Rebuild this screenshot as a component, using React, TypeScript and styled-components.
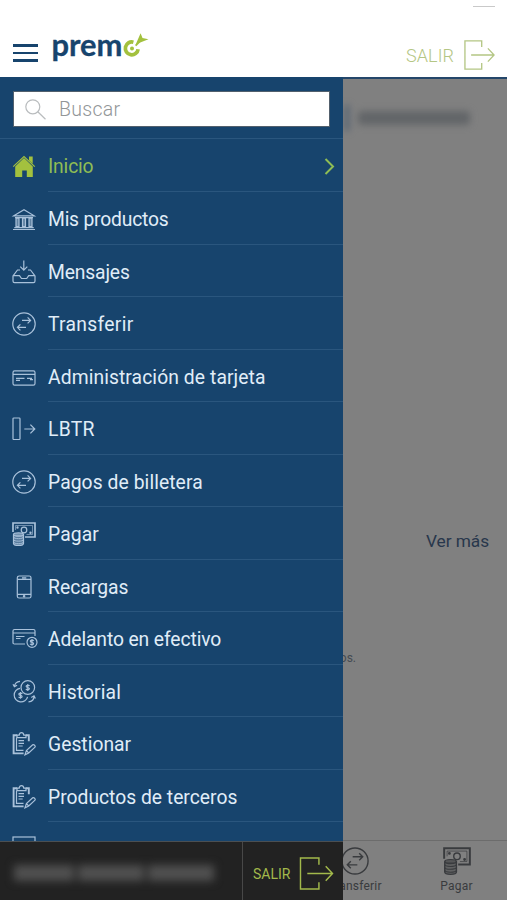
import React from "react";
import styled, { createGlobalStyle } from "styled-components";

const Global = createGlobalStyle`
  * { box-sizing: border-box; }
  body { margin: 0; background: #fff; font-family: Roboto, "Noto Sans", sans-serif; }
`;

const navy = "#17446d";
const lime = "#a3c13e";
const ice = "#a9c1da";

const Page = styled.div`
  width: 507px;
  height: 900px;
  overflow: hidden;
  display: grid;
  grid-template-rows: 77px 823px;
  background: #fff;
`;

const Header = styled.header`
  display: grid;
  grid-template-rows: 5px 2px 1fr;
`;

const Handle = styled.div`
  width: 22px;
  height: 1px;
  margin-top: 1px;
  margin-right: 12px;
  justify-self: end;
  background: #c9c9c9;
  grid-row: 2;
`;

const HeaderRow = styled.div`
  grid-row: 3;
  display: flex;
  align-items: flex-start;
  padding: 11px 12px 0 13px;
`;

const Burger = styled.div`
  display: flex;
  flex-direction: column;
  gap: 5px;
  width: 25px;
  padding-top: 26px;
`;

const BurgerBar = styled.span`
  height: 2.5px;
  background: ${navy};
`;

const Logo = styled.svg`
  display: block;
  margin-left: 8px;
  overflow: visible;
`;

const HeaderExit = styled.div`
  margin-left: auto;
  display: flex;
  align-items: center;
  gap: 10px;
  height: 30px;
  margin-top: 22px;
  color: #b4c684;
  font-size: 18px;
  font-weight: 300;
`;

const ExitText = styled.span<{ $space: number }>`
  letter-spacing: ${(p) => p.$space}px;
  margin-right: ${(p) => -p.$space}px;
`;

const Body = styled.div`
  display: grid;
  grid-template-columns: 343px 164px;
  grid-template-rows: 823px;
`;

const Content = styled.main`
  grid-area: 1 / 1 / 2 / 3;
  display: grid;
  grid-template-rows: 78px 415px 102px 166px 1fr;
  border-top: 2px solid #24466a;
  background: #808080;
  overflow: hidden;
`;

const Greeting = styled.div`
  display: flex;
  align-items: center;
  justify-content: flex-end;
  gap: 9px;
  padding-right: 37px;
  filter: blur(3.5px);
`;

const GreetingMark = styled.span`
  width: 4px;
  height: 26px;
  background: #4e5d6e;
`;

const GreetingWord = styled.span`
  width: 112px;
  height: 14px;
  border-radius: 4px;
  background: #626568;
`;

const MoreLink = styled.div`
  display: flex;
  align-items: flex-end;
  justify-content: flex-end;
  padding: 0 18px 21px 0;
  font-size: 17.3px;
  line-height: 20px;
  letter-spacing: -0.05px;
  color: #28374c;
`;

const Notice = styled.div`
  display: flex;
  align-items: flex-end;
  justify-content: flex-end;
  padding: 0 151px 9px 0;
  font-size: 12px;
  line-height: 14px;
  color: #454b52;
`;

const TabBar = styled.nav`
  grid-row: 5;
  display: grid;
  grid-template-columns: 304px 102px 101px;
  border-top: 1px solid #6c6c6c;
  color: #393b3e;
`;

const Tab = styled.div`
  display: flex;
  flex-direction: column;
  align-items: center;
  padding-top: 6px;
  font-size: 12px;
  line-height: 14px;
  letter-spacing: 0.2px;
  gap: 4px;
`;

const Drawer = styled.aside`
  grid-area: 1 / 1 / 2 / 2;
  display: grid;
  grid-template-rows: 61px 703px 59px;
  background: ${navy};
  z-index: 1;
  overflow: hidden;
`;

const SearchArea = styled.div`
  padding: 14px 13px 0;
`;

const SearchBox = styled.div`
  height: 36px;
  display: flex;
  align-items: center;
  gap: 13px;
  padding-left: 11px;
  background: #fff;
  border: 1.5px solid #52606d;
  color: #929698;
  font-size: 19.5px;
  font-weight: 300;
  letter-spacing: 0.3px;
`;

const SearchGlyph = styled.span`
  color: #b9bcbe;
`;

const Menu = styled.div`
  border-top: 1px solid #2a567e;
  overflow: hidden;
`;

const Item = styled.div<{ $active?: boolean; $first?: boolean }>`
  height: ${(p) => (p.$first ? 53.3 : 52.53)}px;
  display: grid;
  grid-template-columns: 48px 1fr;
  color: ${(p) => (p.$active ? lime : ice)};
`;

const IconCell = styled.div`
  display: flex;
  align-items: center;
  padding: 1px 0 0 12px;
`;

const LabelCell = styled.div<{ $active?: boolean }>`
  display: flex;
  align-items: center;
  justify-content: space-between;
  padding: 3px 8px 0 0;
  border-bottom: 1px solid #2a567e;
  color: ${(p) => (p.$active ? "#8fbd54" : "#e0edf8")};
`;

const Label = styled.span<{ $space: number }>`
  font-size: 19.3px;
  letter-spacing: ${(p) => p.$space}px;
  white-space: nowrap;
`;

const Footer = styled.footer`
  display: grid;
  grid-template-columns: 242px 1fr;
  background: #222;
  border-top: 1px solid #4b4f52;
`;

const UserName = styled.div`
  display: flex;
  align-items: center;
  gap: 4px;
  padding: 4px 0 0 14px;
  filter: blur(4.5px);
`;

const NamePart = styled.span<{ $w: number }>`
  width: ${(p) => p.$w}px;
  height: 16px;
  background: #505050;
`;

const FooterExit = styled.div`
  display: flex;
  align-items: center;
  gap: 9px;
  padding: 5px 0 0 10px;
  border-left: 1.5px solid #484848;
  color: #a2b94b;
  font-size: 14px;
`;

const Icon = styled.svg<{ $sw?: number }>`
  display: block;
  fill: none;
  stroke: currentColor;
  stroke-width: ${(p) => p.$sw ?? 1.2};
  overflow: visible;
  flex: none;
`;

function ExitIcon({ w, h, sw }: { w: number; h: number; sw: number }) {
  return (
    <Icon width={w} height={h} viewBox="0 0 35 34" $sw={sw}>
      <path d="M20 8V1H1v32h19v-7M8 17h26M27 9.5l7 7.5-7 7.5" />
    </Icon>
  );
}

function Swap({ size = 24 }: { size?: number }) {
  return (
    <Icon width={size} height={size} viewBox="0 0 24 24">
      <circle cx="12" cy="12" r="11.2" />
      <path d="M10 8.4h8.6M15.6 5.4l3 3-3 3M14 15.3H5.4M8.4 12.3l-3 3 3 3" />
    </Icon>
  );
}

function Money({ size = 24 }: { size?: number }) {
  return (
    <Icon width={size} height={size} viewBox="0 0 24 24">
      <path d="M1 10V1h22v14H13" strokeWidth="1.7" />
      <path d="M3.5 8V3.5h17v9h-6" strokeWidth=".6" />
      <circle cx="12" cy="8" r="2.8" />
      <circle cx="5.5" cy="5.5" r=".6" />
      <circle cx="18.5" cy="10.7" r=".6" />
      <path d="M1.5 12.5v9c0 2.6 10 2.6 10 0v-9" fill="currentColor" fillOpacity=".45" />
      <ellipse cx="6.5" cy="12.5" rx="5" ry="1.7" fill="currentColor" fillOpacity=".5" />
      <path d="M1.5 15c0 2.2 10 2.2 10 0M1.5 17.5c0 2.2 10 2.2 10 0M1.5 20c0 2.2 10 2.2 10 0" strokeWidth=".9" />
    </Icon>
  );
}

function Dollar({ x, y }: { x: number; y: number }) {
  return (
    <path
      transform={`translate(${x} ${y})`}
      d="M1.8-1.5C1-2.7-1.8-2.4-1.6-1c.2 1.3 3.2.7 3.2 2.1 0 1.5-2.5 1.6-3.5.4M0-3.4v6.8"
    />
  );
}

function Home() {
  return (
    <Icon width="24" height="24" viewBox="0 0 24 24">
      <path d="M3.2 12.6 12 4l8.8 8.6V23h-6v-6.5h-4.6V23h-7z" fill="currentColor" stroke="none" />
      <path d="M1.2 12.6 12 2.6l10.8 10" />
      <path d="M17 2.5h3.7v7.2L17 6.3z" fill="currentColor" stroke="none" />
    </Icon>
  );
}

function Bank() {
  return (
    <Icon width="24" height="24" viewBox="0 0 24 24">
      <path d="M1.8 8.8 12 2.8l10.2 6zM3 10.7h18M2.3 20.6h19.4M1 22.5h22" />
      <path d="M4 11.2h3v8.5H4zM10.5 11.2h3v8.5h-3zM17 11.2h3v8.5h-3z" fill="currentColor" fillOpacity=".5" />
    </Icon>
  );
}

function Inbox() {
  return (
    <Icon width="24" height="24" viewBox="0 0 24 24">
      <path d="M11.8.5V10M8.3 6.7l3.5 3.5 3.5-3.5M8 10H5.5L1 16v5c0 1 .5 1.7 1.5 1.7h19c1 0 1.5-.7 1.5-1.7v-5l-4.5-6H16M1 15.6h6.5l2 2.9h5.2l2-2.9H23" />
    </Icon>
  );
}

function Card() {
  return (
    <Icon width="24" height="24" viewBox="0 0 24 24">
      <rect x="1" y="5.9" width="22" height="14.3" rx="1.6" />
      <path d="M1 9.4h22M4 13.4h8.5M4 15.4h4M15 13.4h5M18 14.6h3" />
    </Icon>
  );
}

function Gate() {
  return (
    <Icon width="24" height="24" viewBox="0 0 24 24">
      <rect x="1" y="1" width="7" height="21.5" rx=".8" />
      <path d="M12.3 12h10.5M18.4 7.6l4.4 4.4-4.4 4.4" />
    </Icon>
  );
}

function Phone() {
  return (
    <Icon width="24" height="24" viewBox="0 0 24 24">
      <rect x="5.3" y="1" width="13.7" height="22" rx="1.8" />
      <path d="M5.3 4.4H19M5.3 19.3H19M10 2.8h4.3" />
      <circle cx="12.1" cy="21.2" r=".7" />
    </Icon>
  );
}

function Advance() {
  return (
    <Icon width="26" height="24" viewBox="0 0 26 24">
      <path d="M13 17H2.5C1.6 17 1 16.5 1 15.7V4C1 3.1 1.6 2.5 2.5 2.5h19c1 0 1.5.6 1.5 1.5v5M1 6h22M4 9.5h8.5M4 11.5h4.5" />
      <circle cx="20" cy="15.3" r="5" />
      <Dollar x={20} y={15.3} />
    </Icon>
  );
}

function History() {
  return (
    <Icon width="24" height="24" viewBox="0 0 24 24">
      <circle cx="15.8" cy="7.5" r="6.8" />
      <path d="M8 8.4a6.8 6.8 0 1 0 7.6 8.4" />
      <Dollar x={15.8} y={7.5} />
      <Dollar x={8.5} y={15.3} />
      <path d="M2.4 6.5C2.8 3.2 4.6 1.6 8 1.3M1 4.2l1.4 2.6 2.7-1.5M22 16c0 3.5-2 5.7-5.5 5.9M19.3 17.5l2.7-1.7 1.4 2.8" />
    </Icon>
  );
}

function Clipboard() {
  return (
    <Icon width="24" height="24" viewBox="0 0 24 24">
      <path d="M5 3.2H1.6v18.2h10M13.8 3.2h3v6" strokeWidth="1.9" />
      <path d="M4.5 5.5v12.8h7M5 5.7V3.2h2.2C7.5-.2 11.5-.2 11.8 3.2H14v2.5zM6.5 8.7h5.5M6.5 11.4h5.5M6.5 14h4.2" />
      <path d="m13 22.8 1.4-4.2 6.3-5.8c1-.8 3.3 1.2 2.3 2.4l-6.3 5.8zM14.5 18.6l2.2 2.4" />
    </Icon>
  );
}

const items: [string, number, React.ReactNode][] = [
  ["Inicio", -0.15, <Home />],
  ["Mis productos", -0.2, <Bank />],
  ["Mensajes", -0.15, <Inbox />],
  ["Transferir", 0.3, <Swap />],
  ["Administración de tarjeta", 0.09, <Card />],
  ["LBTR", 0.3, <Gate />],
  ["Pagos de billetera", 0.08, <Swap />],
  ["Pagar", 0.1, <Money />],
  ["Recargas", 0.02, <Phone />],
  ["Adelanto en efectivo", -0.1, <Advance />],
  ["Historial", 0.12, <History />],
  ["Gestionar", 0.02, <Clipboard />],
  ["Productos de terceros", 0, <Clipboard />],
];

const NextItem = styled.div`
  padding: 14px 0 0 12px;
  color: ${ice};
`;

export default function App() {
  return (
    <Page>
      <Global />
      <Header>
        <Handle />
        <HeaderRow>
          <Burger>
            <BurgerBar />
            <BurgerBar />
            <BurgerBar />
          </Burger>
          <Logo width="104" height="56" viewBox="46 18 104 56">
            <text x="51.5" y="56" fill={navy} stroke={navy} strokeWidth=".3" fontFamily="Lato" fontWeight="700" fontSize="30" textLength="71" lengthAdjust="spacingAndGlyphs">
              prem
            </text>
            <path d="M133.4 42.2A6.4 6.4 0 1 0 138.1 49.2" fill="none" stroke={lime} strokeWidth="3.7" />
            <circle cx="132" cy="48.5" r="2" fill={lime} />
            <path d="m135.6 45.6 4-4" stroke={lime} strokeWidth="1.8" />
            <path d="m135.8 44.3 4.8-11.1 1.9 4.8 6 1.2z" fill={lime} />
          </Logo>
          <HeaderExit>
            <ExitText $space={0.1}>SALIR</ExitText>
            <ExitIcon w={31} h={30} sw={1.5} />
          </HeaderExit>
        </HeaderRow>
      </Header>
      <Body>
        <Content>
          <Greeting>
            <GreetingMark />
            <GreetingWord />
          </Greeting>
          <MoreLink>Ver más</MoreLink>
          <Notice>productos.</Notice>
          <TabBar>
            <span />
            <Tab>
              <Swap size={28} />
              Transferir
            </Tab>
            <Tab>
              <Money size={28} />
              Pagar
            </Tab>
          </TabBar>
        </Content>
        <Drawer>
          <SearchArea>
            <SearchBox>
              <SearchGlyph>
                <Icon width="21" height="21" viewBox="0 0 21 21">
                  <circle cx="7.8" cy="7.8" r="7" />
                  <path d="m12.8 12.8 7.7 7.4" />
                </Icon>
              </SearchGlyph>
              Buscar
            </SearchBox>
          </SearchArea>
          <Menu>
            {items.map(([name, space, icon], i) => (
              <Item key={name} $active={i === 0} $first={i === 0}>
                <IconCell>{icon}</IconCell>
                <LabelCell $active={i === 0}>
                  <Label $space={space}>{name}</Label>
                  {i === 0 && (
                    <Icon width="11" height="17" viewBox="0 0 11 17" $sw={2}>
                      <path d="m1.5 1 7.5 7.5L1.5 16" />
                    </Icon>
                  )}
                </LabelCell>
              </Item>
            ))}
            <NextItem>
              <Icon width="24" height="16" viewBox="0 0 24 16">
                <rect x="1" y="1" width="22" height="14" />
              </Icon>
            </NextItem>
          </Menu>
          <Footer>
            <UserName>
              <NamePart $w={60} />
              <NamePart $w={66} />
              <NamePart $w={66} />
            </UserName>
            <FooterExit>
              <ExitText $space={0}>SALIR</ExitText>
              <ExitIcon w={35} h={33} sw={1.5} />
            </FooterExit>
          </Footer>
        </Drawer>
      </Body>
    </Page>
  );
}
